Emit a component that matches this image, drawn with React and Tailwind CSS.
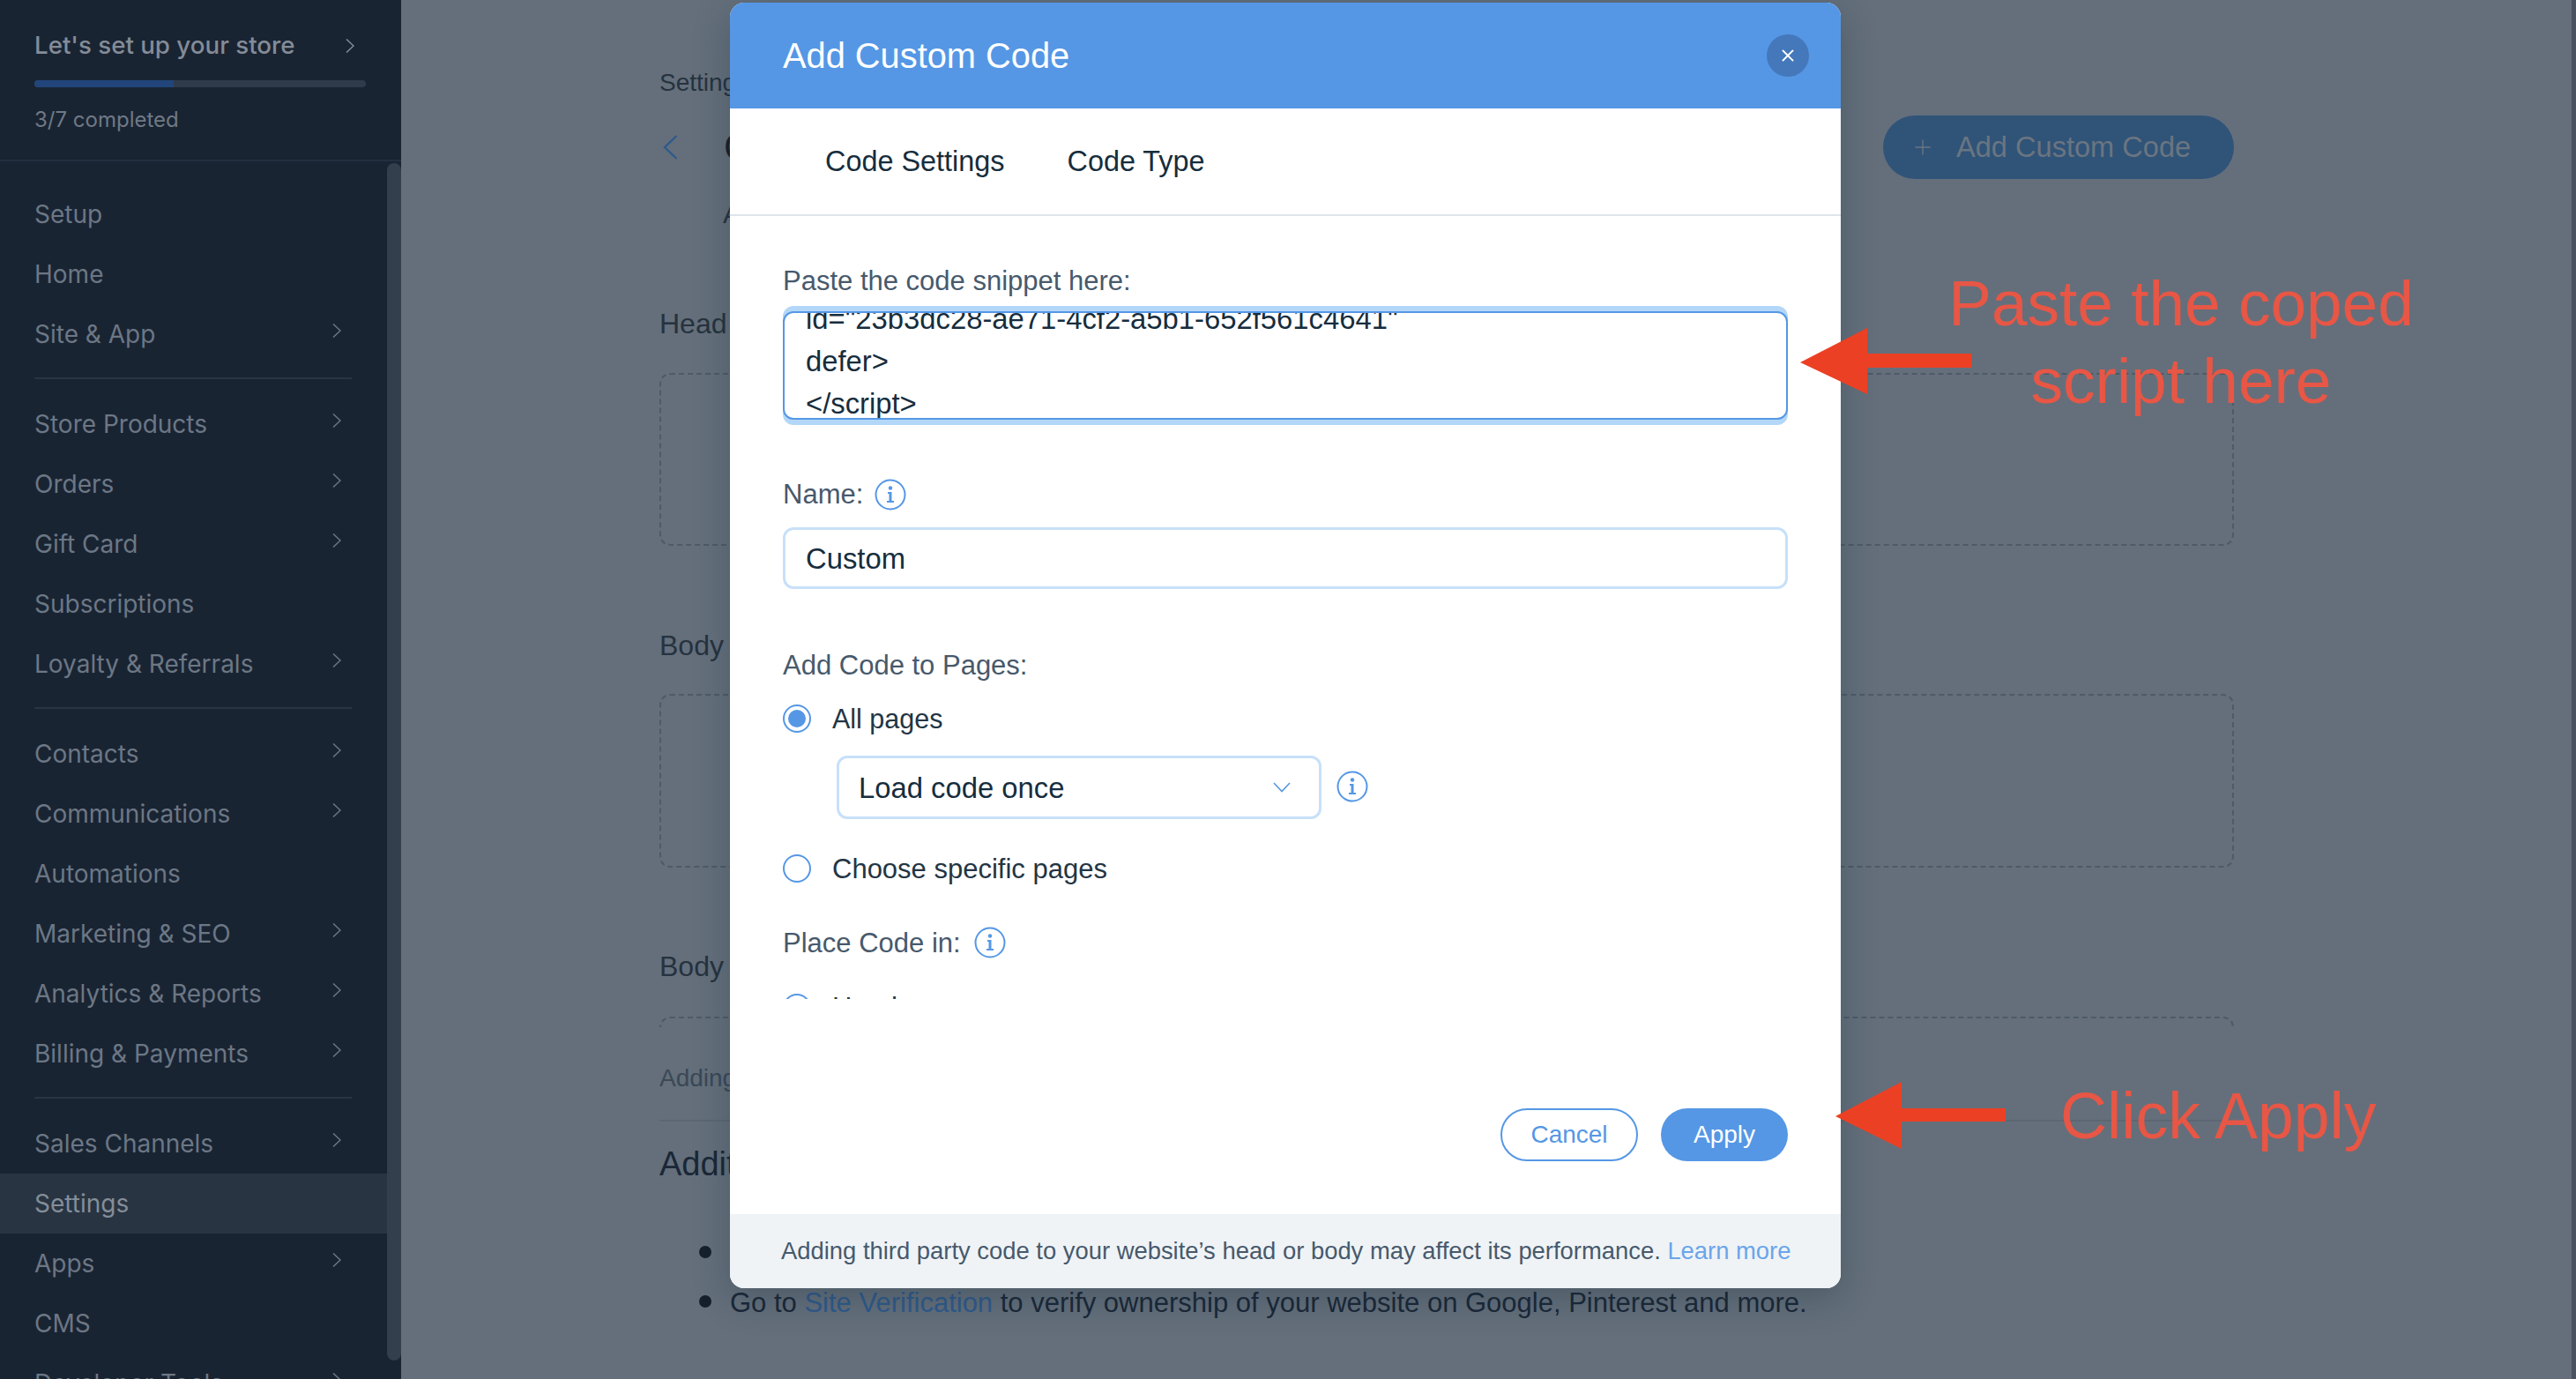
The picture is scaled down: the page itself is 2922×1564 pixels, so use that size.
import React from "react";
import { Plus, X } from "lucide-react";

const groups = [
  [
    { label: "Setup" },
    { label: "Home" },
    { label: "Site & App", more: true },
  ],
  [
    { label: "Store Products", more: true },
    { label: "Orders", more: true },
    { label: "Gift Card", more: true },
    { label: "Subscriptions" },
    { label: "Loyalty & Referrals", more: true },
  ],
  [
    { label: "Contacts", more: true },
    { label: "Communications", more: true },
    { label: "Automations" },
    { label: "Marketing & SEO", more: true },
    { label: "Analytics & Reports", more: true },
    { label: "Billing & Payments", more: true },
  ],
  [
    { label: "Sales Channels", more: true },
    { label: "Settings", active: true },
    { label: "Apps", more: true },
    { label: "CMS" },
    { label: "Developer Tools", more: true },
  ],
];

// thin wix style chevron, the lucide one is too small and squat here
function Chevron({ className }) {
  return (
    <svg width="10" height="16" viewBox="0 0 10 16" fill="none" className={className}>
      <path d="M1 0.5 9 8 1 15.5" stroke="currentColor" strokeWidth="1.5" />
    </svg>
  );
}

function InfoIcon() {
  return (
    <svg width="36" height="36" viewBox="0 0 36 36" fill="none" className="shrink-0">
      <circle cx="18" cy="18" r="16.5" stroke="#5597e5" strokeWidth="2" />
      <circle cx="18" cy="10.5" r="2.2" fill="#5597e5" />
      <path d="M15 15h4.5v10H22v2h-8v-2h2.5v-8H15z" fill="#5597e5" />
    </svg>
  );
}

function Radio({ checked }) {
  return (
    <span className="flex h-8 w-8 shrink-0 items-center justify-center rounded-full border-2 border-[#5597e5] bg-white">
      {checked ? <span className="h-5 w-5 rounded-full bg-[#5597e5]" /> : null}
    </span>
  );
}

function Sidebar() {
  return (
    <aside className="relative h-full w-[455px] shrink-0 overflow-hidden bg-[#192433] font-['Inter',sans-serif]">
      <div className="h-[183px] border-b-2 border-[#232f3e] px-[39px] pt-[32px]">
        <div className="flex h-10 items-center justify-between pr-[14px]">
          <span className="text-[27.7px] font-medium text-[#848c97]">Let's set up your store</span>
          <Chevron className="text-[#848c97]" />
        </div>
        <div className="mt-[19px] h-2 w-[376px] overflow-hidden rounded-full bg-[#2f3b4a]">
          <div className="h-full w-[158px] bg-[#22467b]" />
        </div>
        <div className="mt-[21px] text-[24px] leading-8 text-[#6f7985]">3/7 completed</div>
      </div>
      <div className="w-[439px] pt-[26px]">
        {groups.map((group, i) => (
          <div key={i} className={i > 0 ? "mt-[15px] pt-[17px]" : ""}>
            {i > 0 ? <div className="relative -top-[17px] mx-[39px] h-[2px] w-[360px] bg-[#2a3543]" /> : null}
            {group.map((item) => (
              <div
                key={item.label}
                className={`flex h-[68px] items-center justify-between pl-[39px] pr-[52px] text-[28px] ${
                  item.active ? "bg-[#283442] text-[#848d98]" : "text-[#6c7784]"
                }`}
              >
                <span>{item.label}</span>
                {item.more ? <Chevron className="-mt-2 text-[#6c7784]" /> : null}
              </div>
            ))}
          </div>
        ))}
      </div>
      {/* scrollbar */}
      <div className="absolute left-[439px] top-[185px] h-[1358px] w-4 rounded-full bg-[#343f4e]" />
    </aside>
  );
}

function Main() {
  return (
    <main className="h-full flex-1 overflow-hidden bg-[#646f7b] pl-[293px] pr-[383px] pt-[74px] text-[#26323f]">
      <div className="text-[28px] leading-10">Settings</div>
      <div className="mt-[17px] flex h-[72px] items-center justify-between">
        <div className="flex items-center gap-[52px]">
          <svg width="17" height="28" viewBox="0 0 17 28" fill="none" className="ml-[4px] text-[#2f5a8c]">
            <path d="M15.5 1 2 14l13.5 13" stroke="currentColor" strokeWidth="2.4" />
          </svg>
          <span className="text-[44px] font-medium text-[#16202d]">Custom Code</span>
        </div>
        <button className="flex h-[72px] w-[398px] items-center gap-6 rounded-full bg-[#305378] pl-[31px] text-[32.6px] text-[#6a7581]">
          <Plus size={28} strokeWidth={1.2} />
          <span>Add Custom Code</span>
        </button>
      </div>
      <div className="mt-[20px] pl-[72px] text-[30px] leading-10">Add</div>
      <div className="mt-[84px] text-[32px] leading-10">Head</div>
      <div className="mt-[36px] h-[196px] rounded-[12px] border-2 border-dashed border-[#4f5a68]" />
      <div className="mt-[93px] text-[32px] leading-10">Body</div>
      <div className="mt-[35px] h-[197px] rounded-[12px] border-2 border-dashed border-[#4f5a68]" />
      <div className="mt-[92px] text-[32px] leading-10">Body</div>
      <div className="mt-[37px] h-3 overflow-hidden">
        <div className="h-[100px] rounded-[12px] border-2 border-dashed border-[#4f5a68]" />
      </div>
      <div className="mt-[38px] text-[28px] leading-10 text-[#3a4856]">Adding</div>
      <div className="mt-[27px] h-[2px] bg-[#5c6773]" />
      <div className="mt-[28px] text-[38px] font-medium leading-10 text-[#1a2737]">Additional</div>
      <ul className="mt-[52px] text-[31px] text-[#1a2737]">
        <li className="flex h-14 items-center">
          <span className="ml-[45px] h-[14px] w-[14px] rounded-full bg-[#16202d]" />
        </li>
        <li className="flex h-14 items-center">
          <span className="ml-[45px] h-[14px] w-[14px] rounded-full bg-[#16202d]" />
          <span className="ml-[21px] pt-[5px]">
            Go to <span className="text-[#2f5a8c]">Site Verification</span> to verify ownership of your website on Google, Pinterest and more.
          </span>
        </li>
      </ul>
    </main>
  );
}

function Modal() {
  return (
    <div className="absolute left-[828px] top-[3px] flex h-[1458px] w-[1260px] flex-col overflow-hidden rounded-[16px] bg-white font-['Liberation_Sans',sans-serif] shadow-[0_12px_40px_rgba(22,45,61,0.3)]">
      <div className="flex h-[120px] shrink-0 items-center justify-between bg-[#5597e5] pl-[60px] pr-[36px]">
        <span className="pt-[2px] text-[39.8px] text-white">Add Custom Code</span>
        <span className="flex h-12 w-12 items-center justify-center rounded-full bg-[#4478bb] text-white">
          <X size={22} strokeWidth={2} />
        </span>
      </div>
      <div className="flex h-[122px] shrink-0 items-center gap-[71px] border-b-2 border-[#dfe5eb] pl-[108px] text-[32.4px] text-[#162d3d]">
        <span>Code Settings</span>
        <span>Code Type</span>
      </div>

      <div className="h-[888px] shrink-0 overflow-hidden px-[60px] pt-[54px]">
        <div className="text-[31px] leading-10 text-[#47596c]">Paste the code snippet here:</div>
        <div className="mt-2 h-[135px] rounded-[12px] bg-[#b3d7f8] py-[6px]">
          <div className="h-[123px] overflow-hidden rounded-[12px] border-2 border-[#5597e5] bg-white px-[24px] text-[32.8px] leading-[48px] text-[#162d3d]">
            <div className="-mt-[17px]">id="23b3dc28-ae71-4cf2-a5b1-652f561c4641"</div>
            <div>defer&gt;</div>
            <div>&lt;/script&gt;</div>
          </div>
        </div>

        <div className="mt-[61px] flex h-9 items-center gap-[13px] text-[31px] text-[#47596c]">
          <span className="pt-[1px]">Name:</span>
          <InfoIcon />
        </div>
        <div className="mt-[19px] flex h-[70px] items-center rounded-[12px] border-[3px] border-[#c8e0f9] px-[23px] pt-[1px] text-[32.8px] text-[#162d3d]">
          Custom
        </div>

        <div className="mt-[66px] pt-[1px] text-[31px] leading-10 text-[#47596c]">Add Code to Pages:</div>
        <div className="mt-[24px] flex h-8 items-center gap-6 text-[30.5px] text-[#233544]">
          <Radio checked />
          <span className="pt-[2px]">All pages</span>
        </div>
        <div className="ml-[61px] mt-[26px] flex items-center gap-[17px]">
          <div className="flex h-[72px] w-[550px] items-center justify-between rounded-[12px] border-[3px] border-[#c8e0f9] pl-[22px] pr-[32px] text-[32.8px] text-[#162d3d]">
            <span className="pt-[1px]">Load code once</span>
            <svg width="20" height="12" viewBox="0 0 20 12" fill="none" className="text-[#5597e5]">
              <path d="M1 1l9 9.5L19 1" stroke="currentColor" strokeWidth="1.6" />
            </svg>
          </div>
          <div className="-mt-[2px]">
            <InfoIcon />
          </div>
        </div>
        <div className="mt-[40px] flex h-8 items-center gap-6 text-[31px] text-[#233544]">
          <Radio />
          <span className="pt-[2px]">Choose specific pages</span>
        </div>
        <div className="mt-[50px] flex h-9 items-center gap-[15px] text-[31px] text-[#47596c]">
          <span className="pt-[3px]">Place Code in:</span>
          <InfoIcon />
        </div>
        <div className="mt-[40px] flex h-8 items-center gap-6 text-[31px] text-[#233544]">
          <Radio />
          <span>Head</span>
        </div>
      </div>

      <div className="flex flex-1 items-start justify-end gap-[26px] pr-[60px] pt-[124px] text-[28px]">
        <button className="flex h-[60px] w-[156px] items-center justify-center rounded-full border-2 border-[#5597e5] text-[#5597e5]">
          Cancel
        </button>
        <button className="flex h-[60px] w-[144px] items-center justify-center rounded-full bg-[#5597e5] text-white">
          Apply
        </button>
      </div>

      <div className="flex h-[84px] shrink-0 items-center bg-[#eff3f6] pl-[58px] text-[27.4px] text-[#47596c]">
        <span>
          Adding third party code to your website’s head or body may affect its performance.{" "}
          <span className="text-[#6aa5ea]">Learn more</span>
        </span>
      </div>
    </div>
  );
}

function Arrow({ className, width, height, points }) {
  return (
    <svg width={width} height={height} viewBox={`0 0 ${width} ${height}`} className={className}>
      <polygon points={points} fill="#ec4024" />
    </svg>
  );
}

export default function App() {
  return (
    <div className="relative flex h-[1564px] w-[2922px] overflow-hidden font-['Liberation_Sans',sans-serif]">
      <Sidebar />
      <Main />
      <div className="h-full w-[5px] shrink-0 bg-[#4a5260]" />
      <Modal />

      {/* annotations drawn over the screenshot */}
      <Arrow
        className="absolute left-[2042px] top-[372px]"
        width={194}
        height={75}
        points="0,39 76,0 76,29 194,29 194,45 76,45 76,75"
      />
      <Arrow
        className="absolute left-[2082px] top-[1227px]"
        width={193}
        height={76}
        points="0,39 75,0 75,30 193,30 193,45 75,45 75,76"
      />
      <div className="absolute left-[2174px] top-[300px] w-[600px] text-center text-[73px] leading-[88px] text-[#e85645]">
        Paste the coped
        <br />
        script here
      </div>
      <div className="absolute left-[2337px] top-[1222px] text-[73.3px] leading-[88px] text-[#e85645]">Click Apply</div>
    </div>
  );
}
